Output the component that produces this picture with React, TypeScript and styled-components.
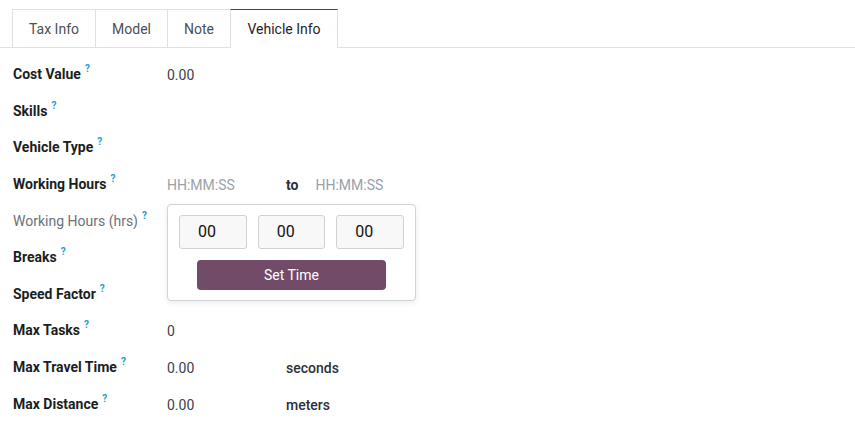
import styled, { createGlobalStyle } from 'styled-components';

const GlobalStyle = createGlobalStyle`
  html, body {
    margin: 0;
    padding: 0;
    background: #fff;
    font-family: Roboto, 'Liberation Sans', sans-serif;
    font-size: 14px;
    color: #212529;
  }
`;

const Page = styled.div`
  width: 855px;
  height: 439px;
  overflow: hidden;
  padding-top: 9px;
  box-sizing: border-box;
`;

const TabBar = styled.div`
  display: flex;
  padding-left: 13px;
  border-bottom: 1px solid #dee2e6;
`;

const Tab = styled.div<{ $active?: boolean; $width: number }>`
  width: ${(p) => p.$width}px;
  box-sizing: border-box;
  display: flex;
  align-items: center;
  justify-content: center;
  font-size: 14px;
  color: ${(p) => (p.$active ? '#1f2328' : '#4a4f57')};
  background: #fff;
  border: 1px solid #dee2e6;
  border-top-color: ${(p) => (p.$active ? '#5a3a52' : '#dee2e6')};
  border-bottom: none;
  margin-left: -1px;
  margin-bottom: ${(p) => (p.$active ? '-1px' : '0')};
  height: ${(p) => (p.$active ? '39px' : '38px')};
`;

const Form = styled.div`
  padding: 9px 0 0 13px;
  display: grid;
  grid-template-columns: 154px 119px 1fr;
  grid-auto-rows: 36.6px;
  align-items: center;
  line-height: 20px;
`;

const Label = styled.div<{ $muted?: boolean }>`
  font-weight: ${(p) => (p.$muted ? 400 : 700)};
  color: ${(p) => (p.$muted ? '#6c7178' : '#1b1e21')};
  font-size: 14px;
  white-space: nowrap;
`;

const Help = styled.span`
  color: #1b9bd1;
  font-size: 10px;
  font-weight: 700;
  margin-left: 4px;
  position: relative;
  top: -7px;
`;

const Value = styled.div`
  color: #3d4148;
  font-size: 14px;
`;

const Placeholder = styled.div`
  color: #9aa1a9;
  font-size: 14px;
  position: relative;
`;

const Unit = styled.div<{ $bold?: boolean }>`
  color: #2c3036;
  font-weight: ${(p) => (p.$bold ? 700 : 500)};
  font-size: 14px;
  display: flex;
  gap: 17px;
`;

const UnitPlaceholder = styled.span`
  color: #9aa1a9;
  font-weight: 400;
`;

const Popover = styled.div`
  position: absolute;
  top: 29px;
  left: 0;
  width: 249px;
  box-sizing: border-box;
  padding: 10px 11px 10px;
  background: #fff;
  border: 1px solid #d0d3d7;
  border-radius: 4px;
  box-shadow: 0 2px 6px rgba(0, 0, 0, 0.08);
  display: flex;
  flex-direction: column;
  align-items: center;
  gap: 11px;
  z-index: 2;
`;

const TimeRow = styled.div`
  display: flex;
  gap: 11px;
  width: 100%;
  justify-content: space-between;
`;

const TimeBox = styled.div`
  width: 69px;
  height: 34px;
  box-sizing: border-box;
  border: 1px solid #cfd2d6;
  border-radius: 3px;
  background: #f8f8f8;
  color: #111;
  font-size: 16px;
  display: flex;
  align-items: center;
  padding-left: 18px;
`;

const SetButton = styled.button`
  width: 189px;
  height: 30px;
  border: none;
  border-radius: 4px;
  background: #714b67;
  color: #fff;
  font-family: inherit;
  font-size: 14px;
  cursor: pointer;
`;

const tabs = [
  { label: 'Tax Info', width: 84 },
  { label: 'Model', width: 73 },
  { label: 'Note', width: 64 },
  { label: 'Vehicle Info', width: 108, active: true },
];

function FieldLabel({ text, muted }: { text: string; muted?: boolean }) {
  return (
    <Label $muted={muted}>
      {text}
      <Help>?</Help>
    </Label>
  );
}

function App() {
  return (
    <Page>
      <GlobalStyle />
      <TabBar>
        {tabs.map((t) => (
          <Tab key={t.label} $active={t.active} $width={t.width}>
            {t.label}
          </Tab>
        ))}
      </TabBar>
      <Form>
        <FieldLabel text='Cost Value' />
        <Value>0.00</Value>
        <div />

        <FieldLabel text='Skills' />
        <div />
        <div />

        <FieldLabel text='Vehicle Type' />
        <div />
        <div />

        <FieldLabel text='Working Hours' />
        <Placeholder>
          HH:MM:SS
          <Popover>
            <TimeRow>
              <TimeBox>00</TimeBox>
              <TimeBox>00</TimeBox>
              <TimeBox>00</TimeBox>
            </TimeRow>
            <SetButton>Set Time</SetButton>
          </Popover>
        </Placeholder>
        <Unit $bold>
          to
          <UnitPlaceholder>HH:MM:SS</UnitPlaceholder>
        </Unit>

        <FieldLabel text='Working Hours (hrs)' muted />
        <div />
        <div />

        <FieldLabel text='Breaks' />
        <div />
        <div />

        <FieldLabel text='Speed Factor' />
        <div />
        <div />

        <FieldLabel text='Max Tasks' />
        <Value>0</Value>
        <div />

        <FieldLabel text='Max Travel Time' />
        <Value>0.00</Value>
        <Unit>seconds</Unit>

        <FieldLabel text='Max Distance' />
        <Value>0.00</Value>
        <Unit>meters</Unit>
      </Form>
    </Page>
  );
}

export default App;
